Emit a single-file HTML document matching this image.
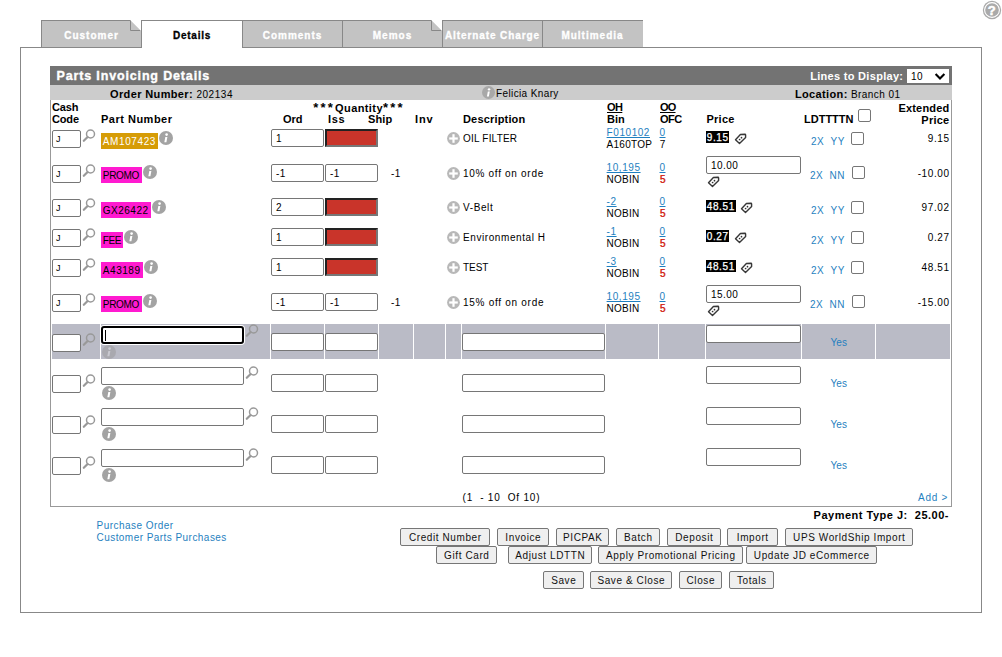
<!DOCTYPE html><html><head><meta charset="utf-8"><style>
html,body{margin:0;padding:0;background:#fff;}
body{width:1002px;height:657px;position:relative;overflow:hidden;font-family:"Liberation Sans",sans-serif;font-size:11px;color:#000;}
.t{position:absolute;white-space:nowrap;}
.r{position:absolute;box-sizing:border-box;}
.inp{position:absolute;box-sizing:border-box;border:1px solid #767676;border-radius:2px;background:#fff;}
.chk{position:absolute;box-sizing:border-box;width:13px;height:13px;border:1px solid #767676;border-radius:2px;background:#fff;}
.u{text-decoration:underline;}
.b{font-weight:bold;letter-spacing:0.37px;font-size:11px;}
.btn{position:absolute;box-sizing:border-box;height:18px;border:1px solid #767676;border-radius:2px;background:#efefef;text-align:center;font-size:10px;letter-spacing:0.6px;text-indent:0.6px;line-height:17px;white-space:nowrap;color:#111;}
</style></head><body>
<svg class="r" style="left:982px;top:0px" width="20" height="20" viewBox="0 0 20 20"><circle cx="10" cy="10" r="9.2" fill="#aaa"/><circle cx="10" cy="10" r="7.4" fill="none" stroke="#fff" stroke-width="1.1"/><text x="9.8" y="14.6" text-anchor="middle" font-family="Liberation Sans" font-weight="bold" font-size="13" fill="#fff" stroke="#fff" stroke-width="0.5">?</text></svg>
<div class="r" style="left:20px;top:47px;width:962px;height:566px;border:1px solid #888;"></div>
<div class="r" style="left:41px;top:20px;width:101px;height:28px;background:#c3c3c3;border:1px solid #888;"></div>
<svg class="r" style="left:130px;top:20px" width="11" height="11" viewBox="0 0 11 11"><polygon points="0,0 11,0 11,11" fill="#fff"/><polygon points="0,0 11,11 0,11" fill="#c3c3c3"/><polyline points="0.5,0 0.5,10.5 11,10.5" fill="none" stroke="#888" stroke-width="1"/><line x1="0.5" y1="0.5" x2="11" y2="11" stroke="#d8d8d8" stroke-width="0.8"/></svg>
<div class="t" style="top:29.53px;font-size:10px;line-height:12px;font-weight:bold;color:#fff;letter-spacing:1.0px;left:-108.5px;width:400px;text-align:center;-webkit-text-stroke:0.3px #fff;">Customer</div>
<div class="r" style="left:141px;top:20px;width:102px;height:28px;background:#fff;border:1px solid #888;border-bottom:none;"></div>
<div class="t" style="top:29.53px;font-size:10px;line-height:12px;font-weight:bold;letter-spacing:0.75px;left:-8.0px;width:400px;text-align:center;-webkit-text-stroke:0.3px #000;">Details</div>
<div class="r" style="left:242px;top:20px;width:101px;height:28px;background:#c3c3c3;border:1px solid #888;"></div>
<div class="t" style="top:29.53px;font-size:10px;line-height:12px;font-weight:bold;color:#fff;letter-spacing:1.0px;left:92.5px;width:400px;text-align:center;-webkit-text-stroke:0.3px #fff;">Comments</div>
<div class="r" style="left:342px;top:20px;width:101px;height:28px;background:#c3c3c3;border:1px solid #888;"></div>
<svg class="r" style="left:431px;top:20px" width="11" height="11" viewBox="0 0 11 11"><polygon points="0,0 11,0 11,11" fill="#fff"/><polygon points="0,0 11,11 0,11" fill="#c3c3c3"/><polyline points="0.5,0 0.5,10.5 11,10.5" fill="none" stroke="#888" stroke-width="1"/><line x1="0.5" y1="0.5" x2="11" y2="11" stroke="#d8d8d8" stroke-width="0.8"/></svg>
<div class="t" style="top:29.53px;font-size:10px;line-height:12px;font-weight:bold;color:#fff;letter-spacing:1.0px;left:192.5px;width:400px;text-align:center;-webkit-text-stroke:0.3px #fff;">Memos</div>
<div class="r" style="left:442px;top:20px;width:101px;height:28px;background:#c3c3c3;border:1px solid #888;"></div>
<div class="t" style="top:29.53px;font-size:10px;line-height:12px;font-weight:bold;color:#fff;letter-spacing:0.9px;left:292.5px;width:400px;text-align:center;-webkit-text-stroke:0.3px #fff;">Alternate Charge</div>
<div class="r" style="left:542px;top:20px;width:101px;height:28px;background:#c3c3c3;border:1px solid #888;border-right:none;"></div>
<div class="t" style="top:29.53px;font-size:10px;line-height:12px;font-weight:bold;color:#fff;letter-spacing:1.0px;left:392.5px;width:400px;text-align:center;-webkit-text-stroke:0.3px #fff;">Multimedia</div>
<div class="r" style="left:50px;top:66px;width:902px;height:441px;border:1px solid #999;border-top:none;"></div>
<div class="r" style="left:50px;top:66px;width:902px;height:19px;background:#737373;"></div>
<div class="r" style="left:50px;top:85px;width:902px;height:15px;background:#cccccc;"></div>
<div class="t" style="top:69.47px;font-size:12.5px;line-height:15px;font-weight:bold;color:#fff;letter-spacing:0.85px;left:56.5px;-webkit-text-stroke:0.35px #fff;">Parts Invoicing Details</div>
<div class="t" style="top:69.69px;font-size:11px;line-height:13px;font-weight:bold;color:#fff;letter-spacing:0.3px;right:98.70000000000005px;text-align:right;">Lines to Display:</div>
<div class="r" style="left:907px;top:69px;width:42px;height:14px;background:#fff;"></div>
<div class="t" style="top:70.53px;font-size:10px;line-height:12px;letter-spacing:0.5px;left:911px;">10</div>
<svg class="r" style="left:934px;top:72px" width="12" height="9" viewBox="0 0 12 9"><polyline points="1.6,2 6,6.5 10.4,2" fill="none" stroke="#000" stroke-width="2.1"/></svg>
<div class="t" style="top:88.03px;font-size:10px;line-height:12px;letter-spacing:0.55px;left:110px;"><span class="b">Order Number:</span> 202134</div>
<svg class="r" style="left:481.5px;top:85.8px" width="13" height="13" viewBox="0 0 14 14"><circle cx="7" cy="7" r="7" fill="#a8a8a8"/><circle cx="7.6" cy="3.6" r="1.3" fill="#fff"/><path d="M6.3 5.9 L8.4 5.9 L7.4 11.2 L5.3 11.2 Z" fill="#fff"/></svg>
<div class="t" style="top:88.03px;font-size:10px;line-height:12px;letter-spacing:0.38px;left:496px;">Felicia Knary</div>
<div class="t" style="top:88.03px;font-size:10px;line-height:12px;letter-spacing:0.43px;right:101.60000000000002px;text-align:right;"><span class="b">Location:</span> Branch 01</div>
<div class="t" style="top:100.69px;font-size:11px;line-height:13px;font-weight:bold;letter-spacing:-0.15px;left:52px;">Cash</div>
<div class="t" style="top:112.69px;font-size:11px;line-height:13px;font-weight:bold;letter-spacing:-0.15px;left:52px;">Code</div>
<div class="t" style="top:112.69px;font-size:11px;line-height:13px;font-weight:bold;letter-spacing:0.5px;left:101px;">Part Number</div>
<div class="t" style="top:101.69px;font-size:11px;line-height:13px;font-weight:bold;letter-spacing:0.4px;left:159px;width:400px;text-align:center;"><span style="letter-spacing:2.2px;font-size:13px;line-height:8px">***</span>Quantity<span style="letter-spacing:2.2px;font-size:13px;line-height:8px">***</span></div>
<div class="t" style="top:112.69px;font-size:11px;line-height:13px;font-weight:bold;letter-spacing:0px;left:283px;">Ord</div>
<div class="t" style="top:112.69px;font-size:11px;line-height:13px;font-weight:bold;letter-spacing:0.7px;left:328px;">Iss</div>
<div class="t" style="top:112.69px;font-size:11px;line-height:13px;font-weight:bold;letter-spacing:0.15px;left:368px;">Ship</div>
<div class="t" style="top:112.69px;font-size:11px;line-height:13px;font-weight:bold;letter-spacing:0.9px;left:415px;">Inv</div>
<div class="t" style="top:112.69px;font-size:11px;line-height:13px;font-weight:bold;letter-spacing:0.17px;left:463px;">Description</div>
<div class="t" style="top:100.69px;font-size:11px;line-height:13px;font-weight:bold;letter-spacing:-0.6px;left:607px;"><span class="u">OH</span></div>
<div class="t" style="top:112.69px;font-size:11px;line-height:13px;font-weight:bold;letter-spacing:0px;left:607px;">Bin</div>
<div class="t" style="top:100.69px;font-size:11px;line-height:13px;font-weight:bold;letter-spacing:-0.8px;left:660px;"><span class="u">OO</span></div>
<div class="t" style="top:112.69px;font-size:11px;line-height:13px;font-weight:bold;letter-spacing:-0.5px;left:660px;">OFC</div>
<div class="t" style="top:112.69px;font-size:11px;line-height:13px;font-weight:bold;letter-spacing:0.25px;left:706.5px;">Price</div>
<div class="t" style="top:112.69px;font-size:11px;line-height:13px;font-weight:bold;letter-spacing:0px;left:804px;">LDTTTTN</div>
<div class="chk" style="left:858px;top:109px"></div>
<div class="t" style="top:101.69px;font-size:11px;line-height:13px;font-weight:bold;letter-spacing:0.2px;right:52.5px;text-align:right;">Extended</div>
<div class="t" style="top:113.69px;font-size:11px;line-height:13px;font-weight:bold;letter-spacing:0.25px;right:52.5px;text-align:right;">Price</div>
<div class="inp" style="left:52px;top:130px;width:29px;height:18px;"></div>
<div class="t" style="top:134.38px;font-size:9px;line-height:11px;left:56px;">J</div>
<svg class="r" style="left:82px;top:128.5px" width="14" height="14" viewBox="0 0 14 14"><circle cx="8.5" cy="5" r="4" fill="none" stroke="#999" stroke-width="1.5"/><line x1="1.8" y1="11.8" x2="5.6" y2="8" stroke="#999" stroke-width="2.2" stroke-linecap="round"/></svg>
<div class="r" style="left:101px;top:133px;width:57px;height:16px;background:#d69c06;"></div>
<div class="t" style="top:135.53px;font-size:10px;line-height:12px;color:#fff;letter-spacing:0.6px;left:102.8px;">AM107423</div>
<svg class="r" style="left:159.0px;top:131.3px" width="14" height="14" viewBox="0 0 14 14"><circle cx="7" cy="7" r="7" fill="#a3a3a3"/><circle cx="7.6" cy="3.6" r="1.3" fill="#fff"/><path d="M6.3 5.9 L8.4 5.9 L7.4 11.2 L5.3 11.2 Z" fill="#fff"/></svg>
<div class="inp" style="left:271px;top:129px;width:53px;height:18px;"></div>
<div class="t" style="top:132.53px;font-size:10px;line-height:12px;letter-spacing:0.45px;left:276px;">1</div>
<div class="r" style="left:325px;top:129px;width:53px;height:18px;background:#c9342a;border:2px solid;border-color:#222 #777 #777 #222;"></div>
<svg class="r" style="left:447.0px;top:132.0px" width="13" height="13" viewBox="0 0 13 13"><circle cx="6.5" cy="6.5" r="6.4" fill="#b8b8b8"/><rect x="5.4" y="2.2" width="2.2" height="8.6" fill="#fff"/><rect x="2.2" y="5.4" width="8.6" height="2.2" fill="#fff"/></svg>
<div class="t" style="top:132.53px;font-size:10px;line-height:12px;letter-spacing:0.2px;left:463px;">OIL FILTER</div>
<div class="t" style="top:127.03px;font-size:10px;line-height:12px;color:#1f7fc0;letter-spacing:0.56px;left:606.6px;"><span class="u">F010102</span></div>
<div class="t" style="top:139.03px;font-size:10px;line-height:12px;letter-spacing:0.25px;left:606.6px;">A160TOP</div>
<div class="t" style="top:127.03px;font-size:10px;line-height:12px;color:#1f7fc0;letter-spacing:0.45px;left:659.5px;"><span class="u">0</span></div>
<div class="t" style="top:139.03px;font-size:10px;line-height:12px;letter-spacing:0.45px;left:659.8px;">7</div>
<div class="r" style="left:706px;top:131px;width:23px;height:12px;background:#000;"></div>
<div class="t" style="top:131.53px;font-size:10px;line-height:12px;color:#fff;letter-spacing:0.6px;left:706.8px;-webkit-text-stroke:0.25px #fff;">9.15</div>
<svg class="r" style="left:734px;top:132.5px" width="13" height="13" viewBox="0 0 13 13"><path d="M1.5 6.8 L6.4 1.5 L10.9 1.2 Q11.6 1.2 11.6 1.9 L11.6 4.6 L5.5 10.6 Z" fill="none" stroke="#383838" stroke-width="1.4" stroke-linejoin="round"/><circle cx="7.5" cy="4.7" r="0.85" fill="#333"/><circle cx="5.6" cy="6.5" r="0.85" fill="#333"/></svg>
<div class="t" style="top:135.53px;font-size:10px;line-height:12px;color:#1f7fc0;letter-spacing:0.45px;left:811px;">2X&nbsp;&nbsp;YY</div>
<div class="chk" style="left:851px;top:132px"></div>
<div class="t" style="top:132.53px;font-size:10px;line-height:12px;letter-spacing:0.6px;right:52.39999999999998px;text-align:right;">9.15</div>
<div class="inp" style="left:52px;top:165px;width:29px;height:18px;"></div>
<div class="t" style="top:169.38px;font-size:9px;line-height:11px;left:56px;">J</div>
<svg class="r" style="left:82px;top:163.5px" width="14" height="14" viewBox="0 0 14 14"><circle cx="8.5" cy="5" r="4" fill="none" stroke="#999" stroke-width="1.5"/><line x1="1.8" y1="11.8" x2="5.6" y2="8" stroke="#999" stroke-width="2.2" stroke-linecap="round"/></svg>
<div class="r" style="left:101px;top:167px;width:41px;height:16px;background:#ff1ad0;"></div>
<div class="t" style="top:169.53px;font-size:10px;line-height:12px;letter-spacing:-0.3px;left:102.8px;">PROMO</div>
<svg class="r" style="left:143.0px;top:165.3px" width="14" height="14" viewBox="0 0 14 14"><circle cx="7" cy="7" r="7" fill="#a3a3a3"/><circle cx="7.6" cy="3.6" r="1.3" fill="#fff"/><path d="M6.3 5.9 L8.4 5.9 L7.4 11.2 L5.3 11.2 Z" fill="#fff"/></svg>
<div class="inp" style="left:271px;top:164px;width:53px;height:18px;"></div>
<div class="t" style="top:167.53px;font-size:10px;line-height:12px;letter-spacing:0.45px;left:276px;">-1</div>
<div class="inp" style="left:325px;top:164px;width:53px;height:18px;"></div>
<div class="t" style="top:167.53px;font-size:10px;line-height:12px;letter-spacing:0.45px;left:330px;">-1</div>
<div class="t" style="top:167.53px;font-size:10px;line-height:12px;letter-spacing:0.45px;left:391px;">-1</div>
<svg class="r" style="left:447.0px;top:167.0px" width="13" height="13" viewBox="0 0 13 13"><circle cx="6.5" cy="6.5" r="6.4" fill="#b8b8b8"/><rect x="5.4" y="2.2" width="2.2" height="8.6" fill="#fff"/><rect x="2.2" y="5.4" width="8.6" height="2.2" fill="#fff"/></svg>
<div class="t" style="top:167.53px;font-size:10px;line-height:12px;letter-spacing:0.7px;left:463px;">10% off on orde</div>
<div class="t" style="top:162.03px;font-size:10px;line-height:12px;color:#1f7fc0;letter-spacing:0.56px;left:606.6px;"><span class="u">10,195</span></div>
<div class="t" style="top:174.03px;font-size:10px;line-height:12px;letter-spacing:0.25px;left:606.6px;">NOBIN</div>
<div class="t" style="top:162.03px;font-size:10px;line-height:12px;color:#1f7fc0;letter-spacing:0.45px;left:659.5px;"><span class="u">0</span></div>
<div class="t" style="top:174.03px;font-size:10px;line-height:12px;color:#d22a1e;letter-spacing:0.45px;left:659.8px;text-shadow:0.4px 0 0 #d22a1e;">5</div>
<div class="inp" style="left:706px;top:156px;width:95px;height:18px;"></div>
<div class="t" style="top:159.53px;font-size:10px;line-height:12px;letter-spacing:0.45px;left:711px;">10.00</div>
<svg class="r" style="left:707px;top:176px" width="13" height="13" viewBox="0 0 13 13"><path d="M1.5 6.8 L6.4 1.5 L10.9 1.2 Q11.6 1.2 11.6 1.9 L11.6 4.6 L5.5 10.6 Z" fill="none" stroke="#383838" stroke-width="1.4" stroke-linejoin="round"/><circle cx="7.5" cy="4.7" r="0.85" fill="#333"/><circle cx="5.6" cy="6.5" r="0.85" fill="#333"/></svg>
<div class="t" style="top:169.53px;font-size:10px;line-height:12px;color:#1f7fc0;letter-spacing:0.45px;left:810px;">2X&nbsp;&nbsp;NN</div>
<div class="chk" style="left:852px;top:166px"></div>
<div class="t" style="top:167.53px;font-size:10px;line-height:12px;letter-spacing:0.6px;right:52.39999999999998px;text-align:right;">-10.00</div>
<div class="inp" style="left:52px;top:199px;width:29px;height:18px;"></div>
<div class="t" style="top:203.38px;font-size:9px;line-height:11px;left:56px;">J</div>
<svg class="r" style="left:82px;top:197.5px" width="14" height="14" viewBox="0 0 14 14"><circle cx="8.5" cy="5" r="4" fill="none" stroke="#999" stroke-width="1.5"/><line x1="1.8" y1="11.8" x2="5.6" y2="8" stroke="#999" stroke-width="2.2" stroke-linecap="round"/></svg>
<div class="r" style="left:101px;top:202px;width:50px;height:16px;background:#ff1ad0;"></div>
<div class="t" style="top:204.53px;font-size:10px;line-height:12px;letter-spacing:0.5px;left:102.8px;">GX26422</div>
<svg class="r" style="left:152.0px;top:200.3px" width="14" height="14" viewBox="0 0 14 14"><circle cx="7" cy="7" r="7" fill="#a3a3a3"/><circle cx="7.6" cy="3.6" r="1.3" fill="#fff"/><path d="M6.3 5.9 L8.4 5.9 L7.4 11.2 L5.3 11.2 Z" fill="#fff"/></svg>
<div class="inp" style="left:271px;top:198px;width:53px;height:18px;"></div>
<div class="t" style="top:201.53px;font-size:10px;line-height:12px;letter-spacing:0.45px;left:276px;">2</div>
<div class="r" style="left:325px;top:198px;width:53px;height:18px;background:#c9342a;border:2px solid;border-color:#222 #777 #777 #222;"></div>
<svg class="r" style="left:447.0px;top:201.0px" width="13" height="13" viewBox="0 0 13 13"><circle cx="6.5" cy="6.5" r="6.4" fill="#b8b8b8"/><rect x="5.4" y="2.2" width="2.2" height="8.6" fill="#fff"/><rect x="2.2" y="5.4" width="8.6" height="2.2" fill="#fff"/></svg>
<div class="t" style="top:201.53px;font-size:10px;line-height:12px;letter-spacing:0.6px;left:463px;">V-Belt</div>
<div class="t" style="top:196.03px;font-size:10px;line-height:12px;color:#1f7fc0;letter-spacing:0.56px;left:606.6px;"><span class="u">-2</span></div>
<div class="t" style="top:208.03px;font-size:10px;line-height:12px;letter-spacing:0.25px;left:606.6px;">NOBIN</div>
<div class="t" style="top:196.03px;font-size:10px;line-height:12px;color:#1f7fc0;letter-spacing:0.45px;left:659.5px;"><span class="u">0</span></div>
<div class="t" style="top:208.03px;font-size:10px;line-height:12px;color:#d22a1e;letter-spacing:0.45px;left:659.8px;text-shadow:0.4px 0 0 #d22a1e;">5</div>
<div class="r" style="left:706px;top:200px;width:30px;height:12px;background:#000;"></div>
<div class="t" style="top:200.53px;font-size:10px;line-height:12px;color:#fff;letter-spacing:0.6px;left:706.8px;-webkit-text-stroke:0.25px #fff;">48.51</div>
<svg class="r" style="left:740.3px;top:201.5px" width="13" height="13" viewBox="0 0 13 13"><path d="M1.5 6.8 L6.4 1.5 L10.9 1.2 Q11.6 1.2 11.6 1.9 L11.6 4.6 L5.5 10.6 Z" fill="none" stroke="#383838" stroke-width="1.4" stroke-linejoin="round"/><circle cx="7.5" cy="4.7" r="0.85" fill="#333"/><circle cx="5.6" cy="6.5" r="0.85" fill="#333"/></svg>
<div class="t" style="top:204.53px;font-size:10px;line-height:12px;color:#1f7fc0;letter-spacing:0.45px;left:811px;">2X&nbsp;&nbsp;YY</div>
<div class="chk" style="left:851px;top:201px"></div>
<div class="t" style="top:201.53px;font-size:10px;line-height:12px;letter-spacing:0.6px;right:52.39999999999998px;text-align:right;">97.02</div>
<div class="inp" style="left:52px;top:229px;width:29px;height:18px;"></div>
<div class="t" style="top:233.38px;font-size:9px;line-height:11px;left:56px;">J</div>
<svg class="r" style="left:82px;top:227.5px" width="14" height="14" viewBox="0 0 14 14"><circle cx="8.5" cy="5" r="4" fill="none" stroke="#999" stroke-width="1.5"/><line x1="1.8" y1="11.8" x2="5.6" y2="8" stroke="#999" stroke-width="2.2" stroke-linecap="round"/></svg>
<div class="r" style="left:101px;top:232px;width:22px;height:16px;background:#ff1ad0;"></div>
<div class="t" style="top:234.53px;font-size:10px;line-height:12px;letter-spacing:-0.4px;left:102.8px;">FEE</div>
<svg class="r" style="left:124.0px;top:230.3px" width="14" height="14" viewBox="0 0 14 14"><circle cx="7" cy="7" r="7" fill="#a3a3a3"/><circle cx="7.6" cy="3.6" r="1.3" fill="#fff"/><path d="M6.3 5.9 L8.4 5.9 L7.4 11.2 L5.3 11.2 Z" fill="#fff"/></svg>
<div class="inp" style="left:271px;top:228px;width:53px;height:18px;"></div>
<div class="t" style="top:231.53px;font-size:10px;line-height:12px;letter-spacing:0.45px;left:276px;">1</div>
<div class="r" style="left:325px;top:228px;width:53px;height:18px;background:#c9342a;border:2px solid;border-color:#222 #777 #777 #222;"></div>
<svg class="r" style="left:447.0px;top:231.0px" width="13" height="13" viewBox="0 0 13 13"><circle cx="6.5" cy="6.5" r="6.4" fill="#b8b8b8"/><rect x="5.4" y="2.2" width="2.2" height="8.6" fill="#fff"/><rect x="2.2" y="5.4" width="8.6" height="2.2" fill="#fff"/></svg>
<div class="t" style="top:231.53px;font-size:10px;line-height:12px;letter-spacing:0.58px;left:463px;">Environmental H</div>
<div class="t" style="top:226.03px;font-size:10px;line-height:12px;color:#1f7fc0;letter-spacing:0.56px;left:606.6px;"><span class="u">-1</span></div>
<div class="t" style="top:238.03px;font-size:10px;line-height:12px;letter-spacing:0.25px;left:606.6px;">NOBIN</div>
<div class="t" style="top:226.03px;font-size:10px;line-height:12px;color:#1f7fc0;letter-spacing:0.45px;left:659.5px;"><span class="u">0</span></div>
<div class="t" style="top:238.03px;font-size:10px;line-height:12px;color:#d22a1e;letter-spacing:0.45px;left:659.8px;text-shadow:0.4px 0 0 #d22a1e;">5</div>
<div class="r" style="left:706px;top:230px;width:23px;height:12px;background:#000;"></div>
<div class="t" style="top:230.53px;font-size:10px;line-height:12px;color:#fff;letter-spacing:0.6px;left:706.8px;-webkit-text-stroke:0.25px #fff;">0.27</div>
<svg class="r" style="left:734px;top:231.5px" width="13" height="13" viewBox="0 0 13 13"><path d="M1.5 6.8 L6.4 1.5 L10.9 1.2 Q11.6 1.2 11.6 1.9 L11.6 4.6 L5.5 10.6 Z" fill="none" stroke="#383838" stroke-width="1.4" stroke-linejoin="round"/><circle cx="7.5" cy="4.7" r="0.85" fill="#333"/><circle cx="5.6" cy="6.5" r="0.85" fill="#333"/></svg>
<div class="t" style="top:234.53px;font-size:10px;line-height:12px;color:#1f7fc0;letter-spacing:0.45px;left:811px;">2X&nbsp;&nbsp;YY</div>
<div class="chk" style="left:851px;top:231px"></div>
<div class="t" style="top:231.53px;font-size:10px;line-height:12px;letter-spacing:0.6px;right:52.39999999999998px;text-align:right;">0.27</div>
<div class="inp" style="left:52px;top:259px;width:29px;height:18px;"></div>
<div class="t" style="top:263.38px;font-size:9px;line-height:11px;left:56px;">J</div>
<svg class="r" style="left:82px;top:257.5px" width="14" height="14" viewBox="0 0 14 14"><circle cx="8.5" cy="5" r="4" fill="none" stroke="#999" stroke-width="1.5"/><line x1="1.8" y1="11.8" x2="5.6" y2="8" stroke="#999" stroke-width="2.2" stroke-linecap="round"/></svg>
<div class="r" style="left:101px;top:262px;width:42px;height:16px;background:#ff1ad0;"></div>
<div class="t" style="top:264.53px;font-size:10px;line-height:12px;letter-spacing:0.55px;left:102.8px;">A43189</div>
<svg class="r" style="left:144.0px;top:260.3px" width="14" height="14" viewBox="0 0 14 14"><circle cx="7" cy="7" r="7" fill="#a3a3a3"/><circle cx="7.6" cy="3.6" r="1.3" fill="#fff"/><path d="M6.3 5.9 L8.4 5.9 L7.4 11.2 L5.3 11.2 Z" fill="#fff"/></svg>
<div class="inp" style="left:271px;top:258px;width:53px;height:18px;"></div>
<div class="t" style="top:261.53px;font-size:10px;line-height:12px;letter-spacing:0.45px;left:276px;">1</div>
<div class="r" style="left:325px;top:258px;width:53px;height:18px;background:#c9342a;border:2px solid;border-color:#222 #777 #777 #222;"></div>
<svg class="r" style="left:447.0px;top:261.0px" width="13" height="13" viewBox="0 0 13 13"><circle cx="6.5" cy="6.5" r="6.4" fill="#b8b8b8"/><rect x="5.4" y="2.2" width="2.2" height="8.6" fill="#fff"/><rect x="2.2" y="5.4" width="8.6" height="2.2" fill="#fff"/></svg>
<div class="t" style="top:261.53px;font-size:10px;line-height:12px;letter-spacing:-0.05px;left:463px;">TEST</div>
<div class="t" style="top:256.03px;font-size:10px;line-height:12px;color:#1f7fc0;letter-spacing:0.56px;left:606.6px;"><span class="u">-3</span></div>
<div class="t" style="top:268.03px;font-size:10px;line-height:12px;letter-spacing:0.25px;left:606.6px;">NOBIN</div>
<div class="t" style="top:256.03px;font-size:10px;line-height:12px;color:#1f7fc0;letter-spacing:0.45px;left:659.5px;"><span class="u">0</span></div>
<div class="t" style="top:268.03px;font-size:10px;line-height:12px;color:#d22a1e;letter-spacing:0.45px;left:659.8px;text-shadow:0.4px 0 0 #d22a1e;">5</div>
<div class="r" style="left:706px;top:260px;width:30px;height:12px;background:#000;"></div>
<div class="t" style="top:260.53px;font-size:10px;line-height:12px;color:#fff;letter-spacing:0.6px;left:706.8px;-webkit-text-stroke:0.25px #fff;">48.51</div>
<svg class="r" style="left:740.3px;top:261.5px" width="13" height="13" viewBox="0 0 13 13"><path d="M1.5 6.8 L6.4 1.5 L10.9 1.2 Q11.6 1.2 11.6 1.9 L11.6 4.6 L5.5 10.6 Z" fill="none" stroke="#383838" stroke-width="1.4" stroke-linejoin="round"/><circle cx="7.5" cy="4.7" r="0.85" fill="#333"/><circle cx="5.6" cy="6.5" r="0.85" fill="#333"/></svg>
<div class="t" style="top:264.53px;font-size:10px;line-height:12px;color:#1f7fc0;letter-spacing:0.45px;left:811px;">2X&nbsp;&nbsp;YY</div>
<div class="chk" style="left:851px;top:261px"></div>
<div class="t" style="top:261.53px;font-size:10px;line-height:12px;letter-spacing:0.6px;right:52.39999999999998px;text-align:right;">48.51</div>
<div class="inp" style="left:52px;top:294px;width:29px;height:18px;"></div>
<div class="t" style="top:298.38px;font-size:9px;line-height:11px;left:56px;">J</div>
<svg class="r" style="left:82px;top:292.5px" width="14" height="14" viewBox="0 0 14 14"><circle cx="8.5" cy="5" r="4" fill="none" stroke="#999" stroke-width="1.5"/><line x1="1.8" y1="11.8" x2="5.6" y2="8" stroke="#999" stroke-width="2.2" stroke-linecap="round"/></svg>
<div class="r" style="left:101px;top:296px;width:41px;height:16px;background:#ff1ad0;"></div>
<div class="t" style="top:298.53px;font-size:10px;line-height:12px;letter-spacing:-0.3px;left:102.8px;">PROMO</div>
<svg class="r" style="left:143.0px;top:294.3px" width="14" height="14" viewBox="0 0 14 14"><circle cx="7" cy="7" r="7" fill="#a3a3a3"/><circle cx="7.6" cy="3.6" r="1.3" fill="#fff"/><path d="M6.3 5.9 L8.4 5.9 L7.4 11.2 L5.3 11.2 Z" fill="#fff"/></svg>
<div class="inp" style="left:271px;top:293px;width:53px;height:18px;"></div>
<div class="t" style="top:296.53px;font-size:10px;line-height:12px;letter-spacing:0.45px;left:276px;">-1</div>
<div class="inp" style="left:325px;top:293px;width:53px;height:18px;"></div>
<div class="t" style="top:296.53px;font-size:10px;line-height:12px;letter-spacing:0.45px;left:330px;">-1</div>
<div class="t" style="top:296.53px;font-size:10px;line-height:12px;letter-spacing:0.45px;left:391px;">-1</div>
<svg class="r" style="left:447.0px;top:296.0px" width="13" height="13" viewBox="0 0 13 13"><circle cx="6.5" cy="6.5" r="6.4" fill="#b8b8b8"/><rect x="5.4" y="2.2" width="2.2" height="8.6" fill="#fff"/><rect x="2.2" y="5.4" width="8.6" height="2.2" fill="#fff"/></svg>
<div class="t" style="top:296.53px;font-size:10px;line-height:12px;letter-spacing:0.72px;left:463px;">15% off on orde</div>
<div class="t" style="top:291.03px;font-size:10px;line-height:12px;color:#1f7fc0;letter-spacing:0.56px;left:606.6px;"><span class="u">10,195</span></div>
<div class="t" style="top:303.03px;font-size:10px;line-height:12px;letter-spacing:0.25px;left:606.6px;">NOBIN</div>
<div class="t" style="top:291.03px;font-size:10px;line-height:12px;color:#1f7fc0;letter-spacing:0.45px;left:659.5px;"><span class="u">0</span></div>
<div class="t" style="top:303.03px;font-size:10px;line-height:12px;color:#d22a1e;letter-spacing:0.45px;left:659.8px;text-shadow:0.4px 0 0 #d22a1e;">5</div>
<div class="inp" style="left:706px;top:285px;width:95px;height:18px;"></div>
<div class="t" style="top:288.53px;font-size:10px;line-height:12px;letter-spacing:0.45px;left:711px;">15.00</div>
<svg class="r" style="left:707px;top:305px" width="13" height="13" viewBox="0 0 13 13"><path d="M1.5 6.8 L6.4 1.5 L10.9 1.2 Q11.6 1.2 11.6 1.9 L11.6 4.6 L5.5 10.6 Z" fill="none" stroke="#383838" stroke-width="1.4" stroke-linejoin="round"/><circle cx="7.5" cy="4.7" r="0.85" fill="#333"/><circle cx="5.6" cy="6.5" r="0.85" fill="#333"/></svg>
<div class="t" style="top:298.53px;font-size:10px;line-height:12px;color:#1f7fc0;letter-spacing:0.45px;left:810px;">2X&nbsp;&nbsp;NN</div>
<div class="chk" style="left:852px;top:295px"></div>
<div class="t" style="top:296.53px;font-size:10px;line-height:12px;letter-spacing:0.6px;right:52.39999999999998px;text-align:right;">-15.00</div>
<div class="r" style="left:52px;top:324px;width:898px;height:35px;background:#babbc6;"></div>
<div class="r" style="left:100px;top:324px;width:1px;height:35px;background:#fff;"></div>
<div class="r" style="left:270px;top:324px;width:1px;height:35px;background:#fff;"></div>
<div class="r" style="left:324px;top:324px;width:1px;height:35px;background:#fff;"></div>
<div class="r" style="left:378px;top:324px;width:1px;height:35px;background:#fff;"></div>
<div class="r" style="left:413px;top:324px;width:1px;height:35px;background:#fff;"></div>
<div class="r" style="left:445px;top:324px;width:1px;height:35px;background:#fff;"></div>
<div class="r" style="left:461px;top:324px;width:1px;height:35px;background:#fff;"></div>
<div class="r" style="left:605px;top:324px;width:1px;height:35px;background:#fff;"></div>
<div class="r" style="left:658px;top:324px;width:1px;height:35px;background:#fff;"></div>
<div class="r" style="left:705px;top:324px;width:1px;height:35px;background:#fff;"></div>
<div class="r" style="left:801px;top:324px;width:1px;height:35px;background:#fff;"></div>
<div class="r" style="left:875px;top:324px;width:1px;height:35px;background:#fff;"></div>
<div class="inp" style="left:52px;top:334px;width:29px;height:18px;"></div>
<svg class="r" style="left:82px;top:333px" width="14" height="14" viewBox="0 0 14 14"><circle cx="8.5" cy="5" r="4" fill="none" stroke="#999" stroke-width="1.5"/><line x1="1.8" y1="11.8" x2="5.6" y2="8" stroke="#999" stroke-width="2.2" stroke-linecap="round"/></svg>
<div class="r" style="left:101px;top:326px;width:143px;height:18px;border:2px solid #000;border-radius:3px;background:#fff;box-shadow:0 0 0 1px #fff;"></div>
<div class="r" style="left:105px;top:329.5px;width:1px;height:11px;background:#000;"></div>
<svg class="r" style="left:102.0px;top:345.0px" width="14" height="14" viewBox="0 0 14 14"><circle cx="7" cy="7" r="7" fill="#a9a9af"/><circle cx="7.6" cy="3.6" r="1.3" fill="#c9c9d0"/><path d="M6.3 5.9 L8.4 5.9 L7.4 11.2 L5.3 11.2 Z" fill="#c9c9d0"/></svg>
<svg class="r" style="left:245px;top:324px" width="14" height="14" viewBox="0 0 14 14"><circle cx="8.5" cy="5" r="4" fill="none" stroke="#999" stroke-width="1.5"/><line x1="1.8" y1="11.8" x2="5.6" y2="8" stroke="#999" stroke-width="2.2" stroke-linecap="round"/></svg>
<div class="inp" style="left:271px;top:333px;width:53px;height:18px;"></div>
<div class="inp" style="left:325px;top:333px;width:53px;height:18px;"></div>
<div class="inp" style="left:462px;top:333px;width:143px;height:18px;"></div>
<div class="inp" style="left:706px;top:325px;width:95px;height:18px;"></div>
<div class="t" style="top:336.53px;font-size:10px;line-height:12px;color:#1f7fc0;letter-spacing:0.1px;left:830.5px;">Yes</div>
<div class="inp" style="left:52px;top:375px;width:29px;height:18px;"></div>
<svg class="r" style="left:82px;top:374px" width="14" height="14" viewBox="0 0 14 14"><circle cx="8.5" cy="5" r="4" fill="none" stroke="#999" stroke-width="1.5"/><line x1="1.8" y1="11.8" x2="5.6" y2="8" stroke="#999" stroke-width="2.2" stroke-linecap="round"/></svg>
<div class="inp" style="left:101px;top:367px;width:143px;height:18px;"></div>
<svg class="r" style="left:102.0px;top:385.5px" width="14" height="14" viewBox="0 0 14 14"><circle cx="7" cy="7" r="7" fill="#a3a3a3"/><circle cx="7.6" cy="3.6" r="1.3" fill="#fff"/><path d="M6.3 5.9 L8.4 5.9 L7.4 11.2 L5.3 11.2 Z" fill="#fff"/></svg>
<svg class="r" style="left:245px;top:366px" width="14" height="14" viewBox="0 0 14 14"><circle cx="8.5" cy="5" r="4" fill="none" stroke="#999" stroke-width="1.5"/><line x1="1.8" y1="11.8" x2="5.6" y2="8" stroke="#999" stroke-width="2.2" stroke-linecap="round"/></svg>
<div class="inp" style="left:271px;top:374px;width:53px;height:18px;"></div>
<div class="inp" style="left:325px;top:374px;width:53px;height:18px;"></div>
<div class="inp" style="left:462px;top:374px;width:143px;height:18px;"></div>
<div class="inp" style="left:706px;top:366px;width:95px;height:18px;"></div>
<div class="t" style="top:377.53px;font-size:10px;line-height:12px;color:#1f7fc0;letter-spacing:0.1px;left:830.5px;">Yes</div>
<div class="inp" style="left:52px;top:416px;width:29px;height:18px;"></div>
<svg class="r" style="left:82px;top:415px" width="14" height="14" viewBox="0 0 14 14"><circle cx="8.5" cy="5" r="4" fill="none" stroke="#999" stroke-width="1.5"/><line x1="1.8" y1="11.8" x2="5.6" y2="8" stroke="#999" stroke-width="2.2" stroke-linecap="round"/></svg>
<div class="inp" style="left:101px;top:408px;width:143px;height:18px;"></div>
<svg class="r" style="left:102.0px;top:426.5px" width="14" height="14" viewBox="0 0 14 14"><circle cx="7" cy="7" r="7" fill="#a3a3a3"/><circle cx="7.6" cy="3.6" r="1.3" fill="#fff"/><path d="M6.3 5.9 L8.4 5.9 L7.4 11.2 L5.3 11.2 Z" fill="#fff"/></svg>
<svg class="r" style="left:245px;top:407px" width="14" height="14" viewBox="0 0 14 14"><circle cx="8.5" cy="5" r="4" fill="none" stroke="#999" stroke-width="1.5"/><line x1="1.8" y1="11.8" x2="5.6" y2="8" stroke="#999" stroke-width="2.2" stroke-linecap="round"/></svg>
<div class="inp" style="left:271px;top:415px;width:53px;height:18px;"></div>
<div class="inp" style="left:325px;top:415px;width:53px;height:18px;"></div>
<div class="inp" style="left:462px;top:415px;width:143px;height:18px;"></div>
<div class="inp" style="left:706px;top:407px;width:95px;height:18px;"></div>
<div class="t" style="top:418.53px;font-size:10px;line-height:12px;color:#1f7fc0;letter-spacing:0.1px;left:830.5px;">Yes</div>
<div class="inp" style="left:52px;top:457px;width:29px;height:18px;"></div>
<svg class="r" style="left:82px;top:456px" width="14" height="14" viewBox="0 0 14 14"><circle cx="8.5" cy="5" r="4" fill="none" stroke="#999" stroke-width="1.5"/><line x1="1.8" y1="11.8" x2="5.6" y2="8" stroke="#999" stroke-width="2.2" stroke-linecap="round"/></svg>
<div class="inp" style="left:101px;top:449px;width:143px;height:18px;"></div>
<svg class="r" style="left:102.0px;top:467.5px" width="14" height="14" viewBox="0 0 14 14"><circle cx="7" cy="7" r="7" fill="#a3a3a3"/><circle cx="7.6" cy="3.6" r="1.3" fill="#fff"/><path d="M6.3 5.9 L8.4 5.9 L7.4 11.2 L5.3 11.2 Z" fill="#fff"/></svg>
<svg class="r" style="left:245px;top:448px" width="14" height="14" viewBox="0 0 14 14"><circle cx="8.5" cy="5" r="4" fill="none" stroke="#999" stroke-width="1.5"/><line x1="1.8" y1="11.8" x2="5.6" y2="8" stroke="#999" stroke-width="2.2" stroke-linecap="round"/></svg>
<div class="inp" style="left:271px;top:456px;width:53px;height:18px;"></div>
<div class="inp" style="left:325px;top:456px;width:53px;height:18px;"></div>
<div class="inp" style="left:462px;top:456px;width:143px;height:18px;"></div>
<div class="inp" style="left:706px;top:448px;width:95px;height:18px;"></div>
<div class="t" style="top:459.53px;font-size:10px;line-height:12px;color:#1f7fc0;letter-spacing:0.1px;left:830.5px;">Yes</div>
<div class="t" style="top:492.03px;font-size:10px;line-height:12px;letter-spacing:0.8px;left:462.5px;">(1&nbsp; - 10&nbsp; Of 10)</div>
<div class="t" style="top:492.03px;font-size:10px;line-height:12px;color:#1f7fc0;letter-spacing:0.7px;right:54px;text-align:right;">Add &gt;</div>
<div class="t" style="top:508.69px;font-size:11px;line-height:13px;font-weight:bold;letter-spacing:0.5px;right:53px;text-align:right;">Payment Type J:&nbsp;&nbsp;25.00-</div>
<div class="t" style="top:520.03px;font-size:10px;line-height:12px;color:#1f7fc0;letter-spacing:0.47px;left:96.5px;">Purchase Order</div>
<div class="t" style="top:532.03px;font-size:10px;line-height:12px;color:#1f7fc0;letter-spacing:0.45px;left:96.5px;">Customer Parts Purchases</div>
<div class="btn" style="left:400px;top:528px;width:90px">Credit Number</div>
<div class="btn" style="left:497px;top:528px;width:52px">Invoice</div>
<div class="btn" style="left:556px;top:528px;width:53px">PICPAK</div>
<div class="btn" style="left:616px;top:528px;width:44px">Batch</div>
<div class="btn" style="left:667px;top:528px;width:54px">Deposit</div>
<div class="btn" style="left:727px;top:528px;width:51px">Import</div>
<div class="btn" style="left:785px;top:528px;width:128px">UPS WorldShip Import</div>
<div class="btn" style="left:436px;top:546px;width:61px">Gift Card</div>
<div class="btn" style="left:508px;top:546px;width:84px">Adjust LDTTN</div>
<div class="btn" style="left:598px;top:546px;width:145px">Apply Promotional Pricing</div>
<div class="btn" style="left:746px;top:546px;width:131px">Update JD eCommerce</div>
<div class="btn" style="left:543px;top:571px;width:41px">Save</div>
<div class="btn" style="left:590px;top:571px;width:82px">Save &amp; Close</div>
<div class="btn" style="left:679px;top:571px;width:43px">Close</div>
<div class="btn" style="left:729px;top:571px;width:45px">Totals</div>
</body></html>
